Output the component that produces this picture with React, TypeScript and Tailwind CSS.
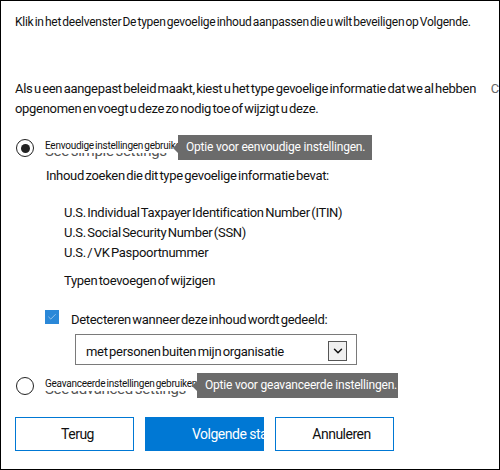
import { Check, ChevronDown } from "lucide-react"

function Tip({ text, className }: { text: string; className: string }) {
  return (
    <div className={`absolute flex items-center ${className}`}>
      <div className="w-0 h-0 border-y-[5px] border-y-transparent border-r-[5px] border-r-[#6b6b6b]" />
      <div className="h-[25px] bg-[#6b6b6b] text-white text-[12px] leading-[25px] pl-[8px] whitespace-nowrap tracking-[-0.2px] [word-spacing:0px]">{text}</div>
    </div>
  )
}

function Radio({ checked }: { checked?: boolean }) {
  return (
    <div className="w-[18px] h-[18px] rounded-full border-[1.5px] border-[#222] flex items-center justify-center shrink-0">
      {checked && <div className="w-[9px] h-[9px] rounded-full bg-[#222]" />}
    </div>
  )
}

function Option({ label, ghost, checked }: { label: string; ghost: string; checked?: boolean }) {
  return (
    <div className="flex items-center h-[20px] pl-px">
      <Radio checked={checked} />
      <div className="relative h-[20px] w-[150px] ml-[11px]">
        <span className="absolute left-0 top-[4px] text-[15px] leading-[18px] text-[#555] whitespace-nowrap">{ghost}</span>
        <span className="absolute left-0 top-[2px] h-[13px] bg-white text-[10px] leading-[12px] text-[#111] whitespace-nowrap tracking-[-0.25px] [word-spacing:-1px]">{label}</span>
      </div>
    </div>
  )
}

export default function App() {
  return (
    <div className="relative w-[500px] h-[470px] border border-black bg-white overflow-hidden text-[#111] text-[13px] leading-[20px] tracking-[-0.3px] [word-spacing:-1.5px]" style={{ fontFamily: "Roboto, 'Liberation Sans', sans-serif" }}>
      <div className="pl-[14px] pt-[11px]">
        <p className="whitespace-nowrap text-[12px] tracking-[-0.25px]">Klik in het deelvenster De typen gevoelige inhoud aanpassen die u wilt beveiligen op Volgende.</p>
        <div className="flex mt-[47px]">
          <p className="w-[470px]">Als u een aangepast beleid maakt, kiest u het type gevoelige informatie dat we al hebben opgenomen en voegt u deze zo nodig toe of wijzigt u deze.</p>
          <span className="ml-[8px] text-[#666]">C</span>
        </div>

        <div className="relative mt-[19px]">
          <Option checked label="Eenvoudige instellingen gebruiken" ghost="See simple settings" />
          <Tip text="Optie voor eenvoudige instellingen." className="left-[158px] top-[-3px] [&>div:last-child]:w-[194px]" />
        </div>

        <p className="mt-[8px] ml-[31px]">Inhoud zoeken die dit type gevoelige informatie bevat:</p>

        <ul className="mt-[17px] ml-[49px]">
          <li>U.S. Individual Taxpayer Identification Number (ITIN)</li>
          <li>U.S. Social Security Number (SSN)</li>
          <li>U.S. / VK Paspoortnummer</li>
        </ul>
        <p className="mt-[8px] ml-[49px]">Typen toevoegen of wijzigen</p>

        <div className="flex items-center mt-[17px] ml-[30px]">
          <div className="w-[14px] h-[14px] bg-[#2b88d8] flex items-center justify-center -mt-[5px]">
            <Check size={10} strokeWidth={1.5} className="text-[#cfe4f7]" />
          </div>
          <span className="ml-[12px] mt-[2px]">Detecteren wanneer deze inhoud wordt gedeeld:</span>
        </div>

        <div className="mt-[4px] ml-[60px] w-[282px] h-[31px] border border-[#7a7a7a] flex items-center justify-between pl-[10px] pr-[9px]">
          <span className="mt-[4px]">met personen buiten mijn organisatie</span>
          <div className="w-[19px] h-[20px] border border-[#555] bg-[#f0f0f0] flex items-center justify-center mt-[2px]">
            <ChevronDown size={14} strokeWidth={2.5} className="text-[#111]" />
          </div>
        </div>

        <div className="relative mt-[11px]">
          <Option label="Geavanceerde instellingen gebruiken" ghost="See advanced settings" />
          <Tip text="Optie voor geavanceerde instellingen." className="left-[177px] top-[-3px] [&>div:last-child]:w-[201px]" />
        </div>

        <div className="flex gap-[11px] mt-[21px] text-[14px] tracking-[-0.5px]">
          <button className="w-[119px] h-[34px] border border-[#0078d4] bg-white text-[#111] pl-[6px]">Terug</button>
          <button className="w-[119px] h-[34px] bg-[#0078d4] text-white text-left pl-[47px] whitespace-nowrap overflow-visible">Volgende stap</button>
          <button className="w-[119px] h-[34px] border border-[#0078d4] bg-white text-[#111] pl-[14px]">Annuleren</button>
        </div>
      </div>
    </div>
  )
}
